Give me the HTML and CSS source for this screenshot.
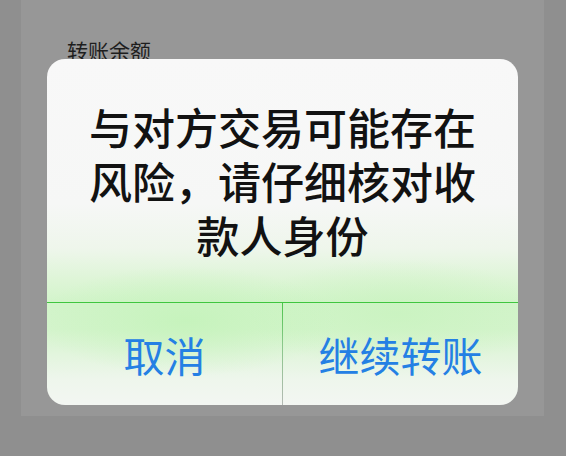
FILE: index.html
```html
<!DOCTYPE html>
<html lang="zh-CN">
<head>
<meta charset="utf-8">
<link rel="stylesheet" href="styles.css">
</head>
<body>
<div class="screen">
  <div class="panel">
    <div class="label">转账余额</div>
  </div>
  <div class="dialog">
    <div class="message">与对方交易可能存在风险，请仔细核对收款人身份</div>
    <div class="actions">
      <div class="btn">取消</div>
      <div class="sep"></div>
      <div class="btn">继续转账</div>
    </div>
  </div>
</div>
</body>
</html>
```
FILE: styles.css
```css
html, body {
  margin: 0;
  padding: 0;
}
body {
  background: #8f8f8f;
  font-family: "Noto Sans CJK SC", "Noto Sans", sans-serif;
}
.screen {
  position: relative;
  width: 566px;
  height: 456px;
  overflow: hidden;
}
.panel {
  margin-left: 21px;
  width: 523px;
  height: 416px;
  background: #979797;
  box-sizing: border-box;
  padding: 40px 0 0 46px;
}
.label {
  font-size: 21px;
  line-height: 21px;
  color: #1e1e1e;
}
.dialog {
  position: absolute;
  left: 47px;
  top: 59px;
  width: 471px;
  height: 346px;
  border-radius: 18px;
  overflow: hidden;
  display: flex;
  flex-direction: column;
  background:
    radial-gradient(ellipse 150px 55px at 140px 262px, rgba(195, 243, 185, 0.8), rgba(195, 243, 185, 0)),
    radial-gradient(ellipse 150px 55px at 350px 255px, rgba(200, 243, 190, 0.75), rgba(200, 243, 190, 0)),
    linear-gradient(to bottom, #f8f8f8 0px, #f6f7f6 145px, #eef6eb 190px, #ddf5d6 222px, #d2f4ca 245px, #d4f4cc 270px, #e2f5dd 295px, #eef6ec 320px, #f3f6f2 346px);
}
.message {
  padding: 40px 35px 41px;
  font-size: 43px;
  line-height: 54px;
  font-weight: 500;
  color: #121212;
  text-align: center;
}
.actions {
  flex: 1;
  display: flex;
  border-top: 1px solid #3fc63f;
}
.btn {
  flex: 1;
  display: flex;
  align-items: center;
  justify-content: center;
  font-size: 41px;
  color: #2480e4;
}
.sep {
  width: 1px;
  background: linear-gradient(to bottom, #4cc44c 0%, #8ac88a 40%, #b4b9b4 100%);
}
```
